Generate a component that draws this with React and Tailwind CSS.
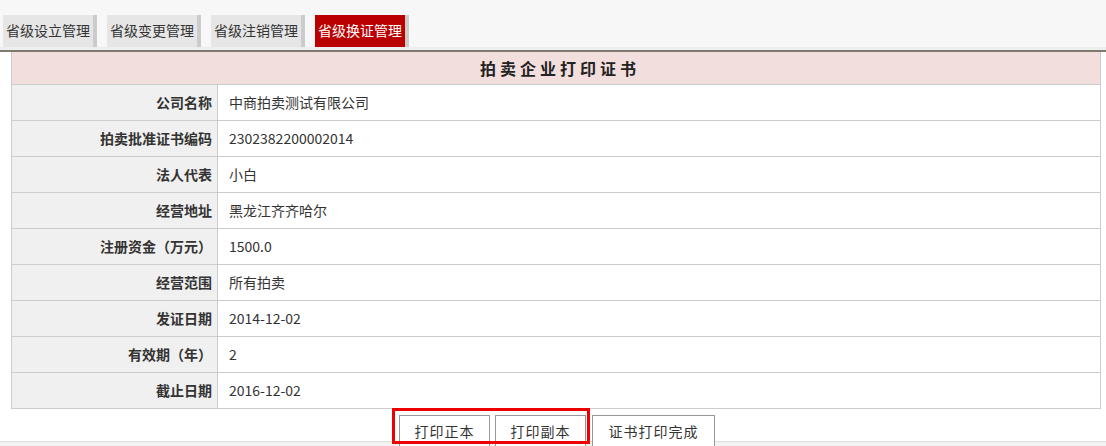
import React from 'react';

const tabs = ['省级设立管理', '省级变更管理', '省级注销管理', '省级换证管理'];

const rows = [
    ['公司名称', '中商拍卖测试有限公司'],
    ['拍卖批准证书编码', '2302382200002014'],
    ['法人代表', '小白'],
    ['经营地址', '黑龙江齐齐哈尔'],
    ['注册资金（万元）', '1500.0'],
    ['经营范围', '所有拍卖'],
    ['发证日期', '2014-12-02'],
    ['有效期（年）', '2'],
    ['截止日期', '2016-12-02'],
];

function App() {
    return (
        <div
            className="relative w-[1106px] h-[446px] overflow-hidden bg-white text-[#333] [text-spacing-trim:space-all]"
            style={{ fontFamily: '"Microsoft YaHei", "Noto Sans CJK SC", sans-serif' }}
        >
            {/* footer edge, behind the buttons */}
            <div className="absolute left-0 right-0 top-[441px] h-[5px] border-t border-[#dddddd] bg-[#f3f3f3]" />

            {/* top tab bar */}
            <div className="bg-[#f7f7f7] pt-[15px] pl-[3px] flex gap-[10px] h-[47px]">
                {tabs.map((t, i) => (
                    <div
                        key={t}
                        className={
                            i === 3
                                ? 'h-[32px] w-[94px] bg-[#bb0000] text-white text-[14px] leading-[31px] pl-[3px] border-r-[4px] border-[#cccccc]'
                                : 'h-[32px] w-[94px] bg-[#e6e6e6] text-[14px] leading-[31px] pl-[3px] border-r-[4px] border-[#cccccc]'
                        }
                    >
                        {t}
                    </div>
                ))}
            </div>
            <div className="h-[3px] bg-[#eeeeee]" />
            <div className="h-[2px] bg-[#807a6e]" />

            {/* certificate table */}
            <div className="px-[11px]">
                <table className="w-[1090px] border-collapse text-[14px]">
                    <tbody>
                        <tr>
                            <td
                                colSpan={2}
                                className="h-[32px] bg-[#f2dedc] border border-t-0 border-[#cccccc] text-center font-bold text-[16px] tracking-[4px] pl-[8px] text-[#222]"
                            >
                                拍卖企业打印证书
                            </td>
                        </tr>
                        {rows.map(([k, v]) => (
                            <tr key={k}>
                                <td className="h-[36px] w-[206px] bg-[#f0f0f0] border border-[#cccccc] text-right pr-[5px] font-bold text-[#333]">
                                    {k}
                                </td>
                                <td className="h-[36px] border border-[#cccccc] pl-[11px] text-[#333]">{v}</td>
                            </tr>
                        ))}
                    </tbody>
                </table>
            </div>

            {/* buttons */}
            <div className="relative z-10 flex pt-[6px] gap-[5px]">
                <div className="absolute left-[392px] top-[-1px] w-[198px] h-[36px] border-[3px] border-[#ee0000] pointer-events-none z-10" />
                <button className="w-[91px] h-[33px] bg-white border border-[#999999] text-[14px] tracking-[1px] text-[#333] ml-[399px]">
                    打印正本
                </button>
                <button className="w-[91px] h-[33px] bg-white border border-[#999999] text-[14px] tracking-[1px] text-[#333]">
                    打印副本
                </button>
                <button className="w-[123px] h-[33px] bg-white border border-[#999999] text-[14px] tracking-[1px] text-[#333] ml-[1px]">
                    证书打印完成
                </button>
            </div>
        </div>
    );
}

export default App;
